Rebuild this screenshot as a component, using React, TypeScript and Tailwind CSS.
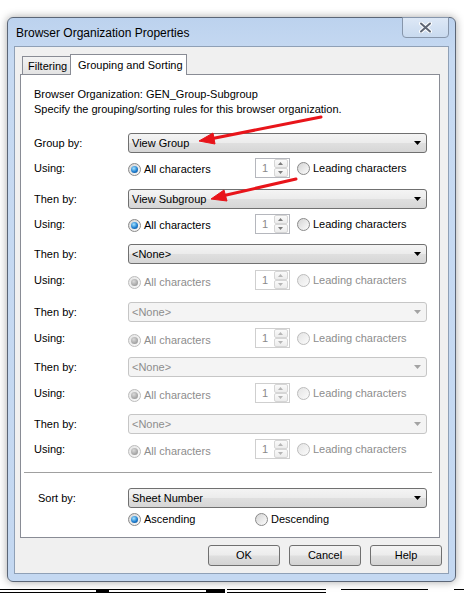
import React from "react";

function Radio({ checked, disabled }: { checked?: boolean; disabled?: boolean }) {
  return (
    <span
      className={`flex h-[13px] w-[13px] shrink-0 items-center justify-center rounded-full border ${
        disabled
          ? "border-[#bcbcbc] bg-[linear-gradient(135deg,#e4e4e4,#fbfbfb)]"
          : "border-[#8a8a8a] bg-[linear-gradient(135deg,#d4d4d4,#fcfcfc)]"
      }`}
    >
      {checked && (
        <span
          className={`h-[7px] w-[7px] rounded-full ${
            disabled
              ? "bg-[radial-gradient(circle_at_40%_35%,#dadada,#9c9c9c_75%)]"
              : "bg-[radial-gradient(circle_at_40%_35%,#a6e4ff,#1f7fd0_55%,#0c3f7c)]"
          }`}
        />
      )}
    </span>
  );
}

function Combo({ text, disabled }: { text: string; disabled?: boolean }) {
  return (
    <div
      className={`flex h-5 w-[299px] items-center justify-between rounded-[3px] border pl-[3px] pr-[5px] ${
        disabled
          ? "border-[#c6c6c6] bg-[#f4f4f4] text-[#8d8d8d]"
          : "border-[#707070] bg-[linear-gradient(#f4f4f4,#ececec_48%,#dfdfdf_52%,#d6d6d6)] text-black"
      }`}
    >
      <span className="whitespace-nowrap leading-none">{text}</span>
      <svg width="7" height="4" viewBox="0 0 7 4">
        <path d="M0 0h7L3.5 4z" fill={disabled ? "#a3a3a3" : "#000"} />
      </svg>
    </div>
  );
}

function Spin({ disabled }: { disabled?: boolean }) {
  const arrow = disabled ? "#b5b5b5" : "#7b7b7b";
  return (
    <div
      className={`flex h-5 w-[35px] shrink-0 items-center border bg-white ${
        disabled ? "border-[#cfcfcf]" : "border-[#b5b7bd]"
      }`}
    >
      <span className="w-[18px] pl-[6px] text-[#8a8a8a] leading-none">1</span>
      <div className="ml-auto mr-px flex h-[18px] w-[15px] flex-col">
        <div className="flex flex-1 items-center justify-center rounded-[2px] border border-[#d6d6d6] bg-[linear-gradient(#fafafa,#ececec)]">
          <svg width="5" height="3" viewBox="0 0 5 3">
            <path d="M0 3h5L2.5 0z" fill={arrow} />
          </svg>
        </div>
        <div className="flex flex-1 items-center justify-center rounded-[2px] border border-[#d6d6d6] bg-[linear-gradient(#fafafa,#ececec)]">
          <svg width="5" height="3" viewBox="0 0 5 3">
            <path d="M0 0h5L2.5 3z" fill={arrow} />
          </svg>
        </div>
      </div>
    </div>
  );
}

function Group({
  label,
  value,
  comboDisabled,
  usingDisabled,
  top,
  gap,
}: {
  label: string;
  value: string;
  comboDisabled?: boolean;
  usingDisabled?: boolean;
  top: string;
  gap: string;
}) {
  const txt = usingDisabled ? "text-[#8d8d8d]" : "text-black";
  return (
    <div className={top}>
      <div className="flex h-5 items-center">
        <span className="w-[94px] leading-none">{label}</span>
        <Combo text={value} disabled={comboDisabled} />
      </div>
      <div className={`flex h-5 items-center ${gap}`}>
        <span className="w-[94px] leading-none">Using:</span>
        <div className={`flex w-[127px] items-center gap-[3px] ${usingDisabled ? "pt-[5px]" : "pt-[2px]"}`}>
          <Radio checked disabled={usingDisabled} />
          <span className={`whitespace-nowrap leading-none ${txt}`}>All characters</span>
        </div>
        <Spin disabled={usingDisabled} />
        <div className="ml-[7px] flex items-center gap-[3px]">
          <Radio disabled={usingDisabled} />
          <span className={`whitespace-nowrap leading-none ${txt}`}>Leading characters</span>
        </div>
      </div>
    </div>
  );
}

function Btn({ children }: { children: React.ReactNode }) {
  return (
    <div className="flex h-[21px] w-[72px] items-center justify-center rounded-[3px] border border-[#707070] bg-[linear-gradient(#f4f4f4,#ececec_48%,#dfdfdf_52%,#d3d3d3)] leading-none">
      {children}
    </div>
  );
}

export default function App() {
  return (
    <div className="relative h-[593px] w-[464px] overflow-hidden bg-white text-[11px] text-black [font-family:'Liberation_Sans',Arial,sans-serif]">
      <div className="pl-[7px] pt-[17px]">
        {/* window frame */}
        <div className="flex h-[565px] w-[449px] flex-col rounded-[6px] border border-[#5b6677] bg-[linear-gradient(#bcd2ee,#c7daf2_40px,#c4d8f1)] shadow-[0_0_8px_rgba(0,0,0,0.35)]">
          <div className="flex h-[28px] items-start justify-between">
            <span className="whitespace-nowrap pl-[8px] pt-[9px] text-[12px] leading-none">Browser Organization Properties</span>
            <div className="mr-[6px] -mt-px flex h-[21px] w-[47px] items-center justify-center rounded-b-[4px] border border-[#8796ab] bg-[linear-gradient(#dde8f6,#c9daef)]">
              <svg width="13" height="11" viewBox="0 0 13 11">
                <path
                  d="M2 1.5 11 9.5M11 1.5 2 9.5"
                  stroke="#ffffff"
                  strokeWidth="4"
                  strokeLinecap="round"
                />
                <path
                  d="M2 1.5 11 9.5M11 1.5 2 9.5"
                  stroke="#5f6775"
                  strokeWidth="2"
                  strokeLinecap="round"
                />
              </svg>
            </div>
          </div>

          {/* client area */}
          <div className="mx-[6px] flex h-[528px] flex-col border border-[#8fa0b6] bg-[#f0f0f0]">
            <div className="ml-[7px] mt-[7px] flex h-[20px] items-end">
              <div className="flex h-[18px] w-[49px] items-center whitespace-nowrap border border-b-0 border-[#898c95] bg-[linear-gradient(#f3f3f3,#e3e3e3)] pl-[5px] pt-[2px] leading-none">
                Filtering
              </div>
              <div className="relative z-10 -mb-px -ml-px flex h-[21px] w-[117px] items-start whitespace-nowrap border border-b-0 border-[#898c95] bg-white pl-[7px] pt-[5px] leading-none">
                Grouping and Sorting
              </div>
            </div>

            <div className="ml-[5px] flex h-[464px] w-[420px] flex-col border border-[#898c95] bg-white pl-[13px] pt-[12px]">
              <div className="leading-[15px]">Browser Organization: GEN_Group-Subgroup</div>
              <div className="leading-[15px]">Specify the grouping/sorting rules for this browser organization.</div>

              <Group label="Group by:" value="View Group" top="mt-[16px]" gap="mt-[5px]" />
              <Group label="Then by:" value="View Subgroup" top="mt-[11px]" gap="mt-[5px]" />
              <Group label="Then by:" value="<None>" usingDisabled top="mt-[10px]" gap="mt-[6px]" />
              <Group label="Then by:" value="<None>" comboDisabled usingDisabled top="mt-[12px]" gap="mt-[6px]" />
              <Group label="Then by:" value="<None>" comboDisabled usingDisabled top="mt-[9px]" gap="mt-[6px]" />
              <Group label="Then by:" value="<None>" comboDisabled usingDisabled top="mt-[11px]" gap="mt-[5px]" />

              <div className="-ml-[10px] mt-[13px] h-px w-[408px] bg-[#a0a0a0]" />

              <div className="mt-[15px] flex h-5 items-center">
                <span className="w-[94px] pl-[4px] leading-none">Sort by:</span>
                <Combo text="Sheet Number" />
              </div>
              <div className="mt-[3px] flex h-4 items-center pl-[94px]">
                <div className="flex w-[127px] items-center gap-[3px]">
                  <Radio checked />
                  <span className="leading-none">Ascending</span>
                </div>
                <div className="flex items-center gap-[3px]">
                  <Radio />
                  <span className="leading-none">Descending</span>
                </div>
              </div>
            </div>

            <div className="mr-[6px] mt-[7px] flex justify-end gap-[9px]">
              <Btn>OK</Btn>
              <Btn>Cancel</Btn>
              <Btn>Help</Btn>
            </div>
          </div>
        </div>
      </div>

      {/* strip along the lower edge */}
      <div className="mt-[7px] flex h-[4px]">
        <div className="h-full w-[97px] border-y border-black" />
        <div className="h-full w-[13px] bg-black" />
        <div className="h-full w-[98px] border-y border-black" />
        <div className="h-full w-[20px] bg-black" />
        <div className="ml-[2px] h-full w-[100px] border-y border-black" />
        <div className="ml-[15px] h-full w-[88px] border-t border-black" />
        <div className="ml-[26px] h-full w-[10px] border-t border-black" />
      </div>

      {/* red callout arrows */}
      <svg className="pointer-events-none absolute left-0 top-0" width="464" height="593">
        <g fill="#e8141a" stroke="#e8141a">
          <line x1="321" y1="117" x2="210" y2="139" strokeWidth="3" strokeLinecap="round" />
          <path d="M199 141 L213 133 L215 144 Z" strokeWidth="1" strokeLinejoin="round" />
          <line x1="296" y1="179" x2="222" y2="196" strokeWidth="3" strokeLinecap="round" />
          <path d="M211 199 L224 190 L227 201 Z" strokeWidth="1" strokeLinejoin="round" />
        </g>
      </svg>
    </div>
  );
}
